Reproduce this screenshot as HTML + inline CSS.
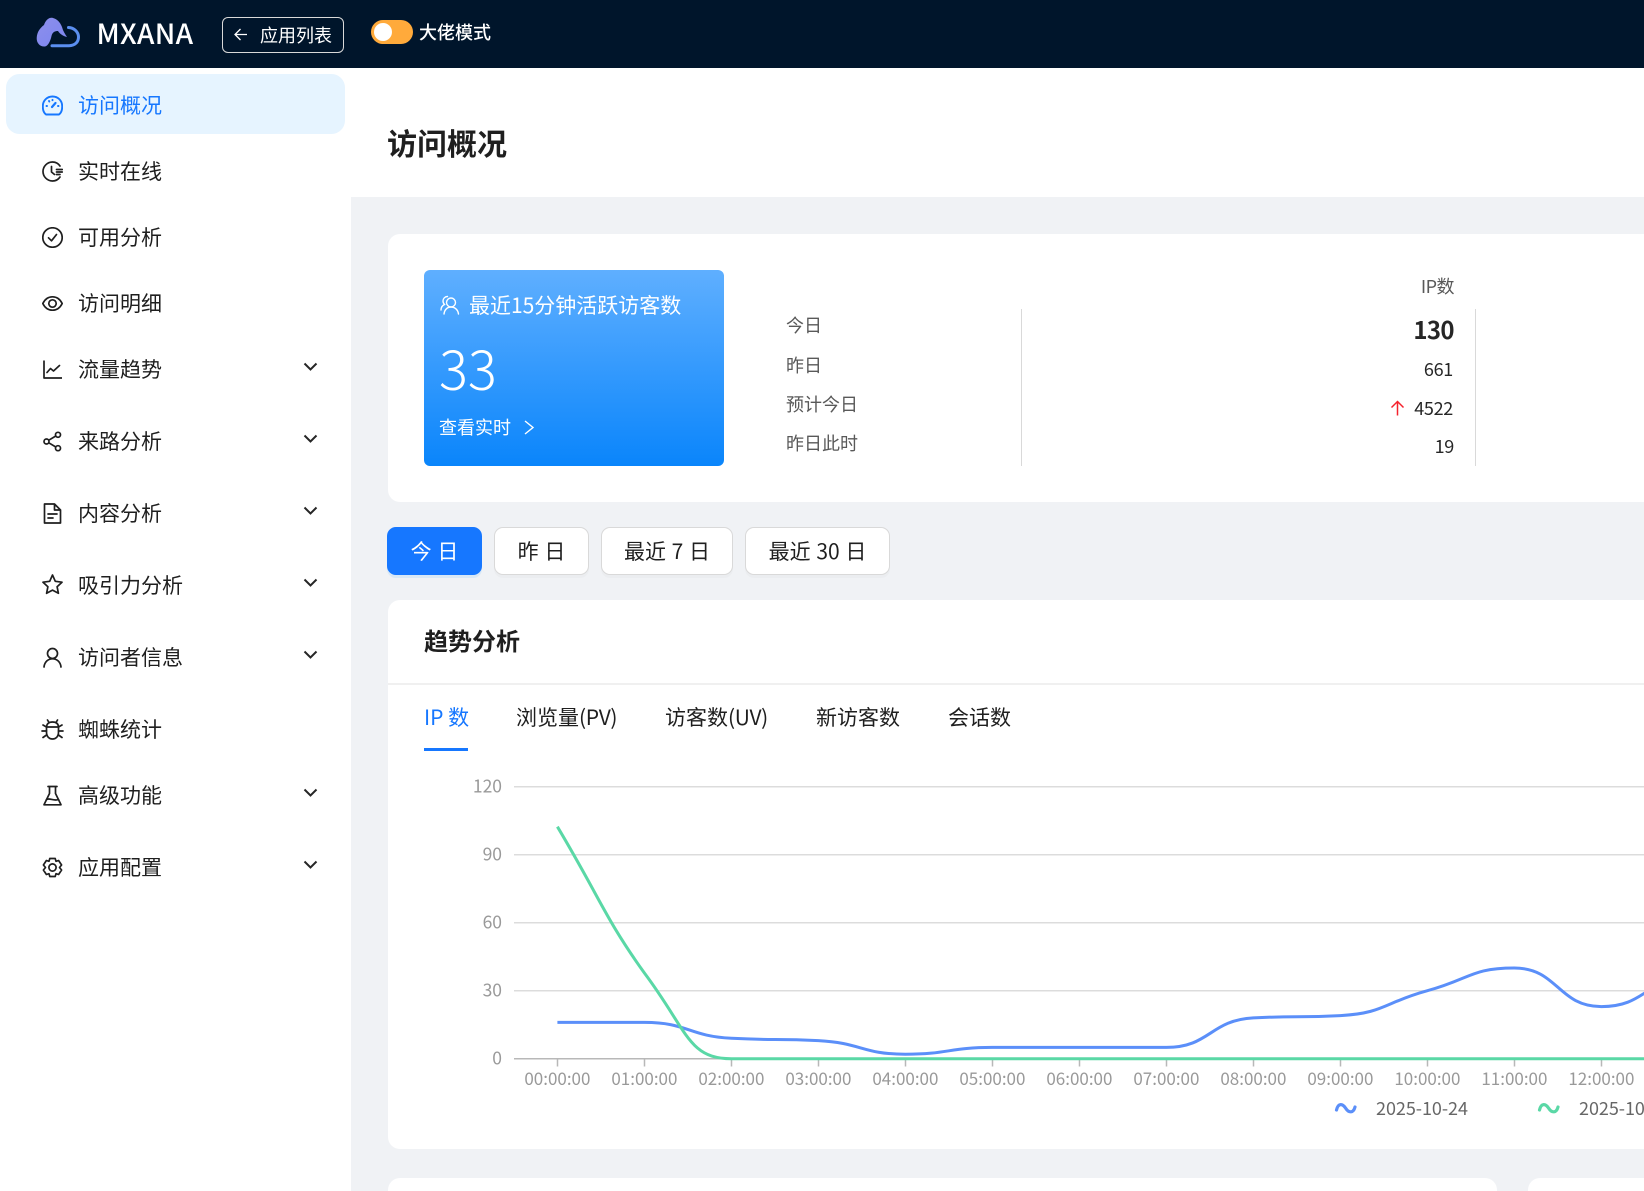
<!DOCTYPE html>
<html lang="zh-CN">
<head>
<meta charset="utf-8">
<title>访问概况</title>
<style>
html,body{margin:0;padding:0;width:1644px;height:1191px;overflow:hidden;background:#f0f2f5}
body{position:relative;font-family:"Noto Sans CJK SC","Liberation Sans",sans-serif;color:#1f1f1f}
.a{position:absolute}
.t{position:absolute;height:30px;line-height:30px;white-space:nowrap}
.m{font-size:21px;left:78px;color:#1f1f1f}
.ic{position:absolute;left:42px;width:21px;height:21px;fill:none;stroke:#1f1f1f;stroke-width:1.700;stroke-linecap:round;stroke-linejoin:round}
.ch{position:absolute;left:303px;width:15px;height:10px;fill:none;stroke:#262626;stroke-width:2}
.l{font-size:18px;left:786px;color:#595959}
.r{font-size:18px;color:#262626;right:191px;text-align:right;letter-spacing:-.3px}
.btn{position:absolute;top:527px;height:48px;box-sizing:border-box;border:1.5px solid #d9d9d9;border-radius:9px;background:#fff;line-height:46px;text-align:center;font-size:21px;color:#1f1f1f;box-shadow:0 3px 0 rgba(0,0,0,.02);white-space:nowrap;word-spacing:1px}
.tab{font-size:21px;top:702px;color:#1f1f1f}
.tab span{letter-spacing:-.35px}
</style>
</head>
<body>

<!-- sidebar & page head -->
<div class="a" style="left:0;top:68px;width:351px;height:1123px;background:#fff"></div>
<div class="a" style="left:351px;top:68px;width:1293px;height:129px;background:#fff"></div>

<!-- top bar -->
<div class="a" style="left:0;top:0;width:1644px;height:68px;background:#00152b"></div>
<svg class="a" style="left:0;top:0" width="90" height="60" viewBox="0 0 90 60">
  <defs><linearGradient id="lg" x1="0" y1="0" x2="1" y2="1"><stop offset="0" stop-color="#8d8fec"/><stop offset="1" stop-color="#7c85ef"/></linearGradient></defs>
  <path d="M44 25C46 19 50 17 53 18C57 19 60 22 62 27C63 31 65 34 67 37C63 36 60 34 58 31C55 31 52.500 32 51.500 36C50.500 41 48 46 45 46.500C40 47 36.500 43 36.700 38C37 32 40 28 44 25Z" fill="url(#lg)"/>
  <path d="M52 45.700H69C75 45.700 78.500 42 78.500 37C78.500 32 74 27.700 68.500 27.500" fill="none" stroke="#5b8ff0" stroke-width="3" stroke-linecap="round"/>
</svg>
<div class="t" style="left:96.500px;top:18px;font-size:28px;font-weight:500;color:#fff;letter-spacing:.3px">MXANA</div>
<div class="a" style="left:222px;top:17px;width:122px;height:36px;box-sizing:border-box;border:1.500px solid #d9d9d9;border-radius:6px"></div>
<svg class="a" style="left:233px;top:27px" width="15" height="15" viewBox="0 0 15 15" fill="none" stroke="#fff" stroke-width="1.300"><path d="M14 7.500H2M7.500 2L2 7.500L7.500 13"/></svg>
<div class="t" style="left:260px;top:20px;font-size:18px;color:#fff">应用列表</div>
<div class="a" style="left:371px;top:20px;width:42px;height:24px;border-radius:12px;background:#ffaa3b"></div>
<div class="a" style="left:374px;top:23px;width:18px;height:18px;border-radius:50%;background:#fff"></div>
<div class="t" style="left:419px;top:17px;font-size:18px;font-weight:500;color:#fff">大佬模式</div>

<!-- active menu -->
<div class="a" style="left:6px;top:74px;width:339px;height:60px;border-radius:13.500px;background:#e6f4ff"></div>

<!-- menu icons -->
<svg class="ic" style="top:95px;stroke:#1677ff;stroke-width:1.900" viewBox="0 0 21 21"><path d="M4 19.500C2 18 .8 15 .8 11.500C.8 5.500 5 1.500 10.500 1.500S20.200 5.500 20.200 11.500C20.200 15 19 18 17 19.500Z"/><path d="M10 12L13.500 8" stroke-width="2.200"/><path d="M4.500 11H5M7 6L7.300 6.500M16 11H16.500M10.500 4.800V5.200" /></svg>
<svg class="ic" style="top:161px" viewBox="0 0 21 21"><path d="M18 5C16.300 2.500 13.500 1 10.500 1C5.300 1 1 5.300 1 10.500S5.300 20 10.500 20C13.500 20 16.300 18.500 18 16"/><path d="M9.500 5.500V11L12.500 13.500M14.500 8.500H20.200M14.500 11H20.200M14.500 13.500H18"/></svg>
<svg class="ic" style="top:227px" viewBox="0 0 21 21"><circle cx="10.500" cy="10.500" r="9.700"/><path d="M6.500 10.800L9.500 13.800L14.500 7.500"/></svg>
<svg class="ic" style="top:293px" viewBox="0 0 21 21"><path d="M.8 10.500C3 6 6.500 3.800 10.500 3.800S18 6 20.200 10.500C18 15 14.500 17.200 10.500 17.200S3 15 .8 10.500Z"/><circle cx="10.500" cy="10.500" r="3.700"/></svg>
<svg class="ic" style="top:359px" viewBox="0 0 21 21"><path d="M2 1.500V19H20" stroke-linecap="butt"/><path d="M5 13.500L8.500 9.500L11.500 12L17.500 6.500"/></svg>
<svg class="ic" style="top:431px" viewBox="0 0 21 21"><circle cx="4.500" cy="10.500" r="2.500"/><circle cx="16" cy="3.800" r="2.500"/><circle cx="16" cy="17.200" r="2.500"/><path d="M6.800 9.200L13.800 5M6.800 11.800L13.800 16"/></svg>
<svg class="ic" style="top:503px" viewBox="0 0 21 21"><path d="M2.500 1H12.500L18.500 7V20H2.500ZM12.500 1V7H18.500"/><path d="M6 11H15M6 15H11"/></svg>
<svg class="ic" style="top:574px" viewBox="0 0 21 21"><path d="M10.500 1L13.300 7.300L20 8.200L15.100 12.700L16.400 19.300L10.500 16.100L4.600 19.300L5.900 12.700L1 8.200L7.700 7.300Z"/></svg>
<svg class="ic" style="top:647px" viewBox="0 0 21 21"><circle cx="10.500" cy="6.500" r="5"/><path d="M2 20C2.500 15 6 11.800 10.500 11.800S18.500 15 19 20"/></svg>
<svg class="ic" style="top:719px;left:41px;width:23px;height:21px" viewBox="0 0 23 21"><path d="M5.500 8.500C5.500 4.500 8 3 11.500 3S17.500 4.500 17.500 8.500V13C17.500 17.500 15 20 11.500 20S5.500 17.500 5.500 13Z"/><path d="M5.500 8H17.500M8 3.500L6.500 1M15 3.500L16.500 1M5.500 12H1M17.500 12H22M5.500 8L2 6M17.500 8L21 6M5.500 16L2 18.500M17.500 16L21 18.500"/></svg>
<svg class="ic" style="top:785px" viewBox="0 0 21 21"><path d="M6 1.500H15M7.500 1.500V8.500L2 19.800H19L13.500 8.500V1.500"/><path d="M4.500 14.500C7.500 12.500 12 16.500 16.500 14.500"/></svg>
<svg class="ic" style="top:857px;left:41px;width:23px;height:21px" viewBox="0 0 23 21"><path d="M8.800 1.500H14.200L15 4.300L17.600 3.500L20.600 8L18.500 10.500L20.600 13L17.600 17.500L15 16.700L14.200 19.500H8.800L8 16.700L5.400 17.500L2.400 13L4.500 10.500L2.400 8L5.400 3.500L8 4.300Z"/><circle cx="11.500" cy="10.500" r="3.600"/></svg>

<!-- menu labels -->
<div class="t m" style="top:90px;color:#1677ff">访问概况</div>
<div class="t m" style="top:156px">实时在线</div>
<div class="t m" style="top:222px">可用分析</div>
<div class="t m" style="top:288px">访问明细</div>
<div class="t m" style="top:354px">流量趋势</div>
<div class="t m" style="top:426px">来路分析</div>
<div class="t m" style="top:498px">内容分析</div>
<div class="t m" style="top:570px">吸引力分析</div>
<div class="t m" style="top:642px">访问者信息</div>
<div class="t m" style="top:714px">蜘蛛统计</div>
<div class="t m" style="top:780px">高级功能</div>
<div class="t m" style="top:852px">应用配置</div>

<!-- chevrons -->
<svg class="ch" style="top:362px" viewBox="0 0 15 10"><path d="M1.500 1.500L7.500 7.500L13.500 1.500"/></svg>
<svg class="ch" style="top:434px" viewBox="0 0 15 10"><path d="M1.500 1.500L7.500 7.500L13.500 1.500"/></svg>
<svg class="ch" style="top:506px" viewBox="0 0 15 10"><path d="M1.500 1.500L7.500 7.500L13.500 1.500"/></svg>
<svg class="ch" style="top:578px" viewBox="0 0 15 10"><path d="M1.500 1.500L7.500 7.500L13.500 1.500"/></svg>
<svg class="ch" style="top:650px" viewBox="0 0 15 10"><path d="M1.500 1.500L7.500 7.500L13.500 1.500"/></svg>
<svg class="ch" style="top:788px" viewBox="0 0 15 10"><path d="M1.500 1.500L7.500 7.500L13.500 1.500"/></svg>
<svg class="ch" style="top:860px" viewBox="0 0 15 10"><path d="M1.500 1.500L7.500 7.500L13.500 1.500"/></svg>

<!-- title -->
<div class="t" style="left:387px;top:124px;height:36px;line-height:36px;font-size:30px;font-weight:600;color:#1f1f1f">访问概况</div>

<!-- overview card -->
<div class="a" style="left:388px;top:234px;width:1290px;height:268px;border-radius:12px;background:#fff"></div>
<div class="a" style="left:424px;top:270px;width:300px;height:196px;border-radius:6px;background:linear-gradient(180deg,#5fafff 0%,#0a85fb 100%)"></div>
<svg class="a" style="left:440px;top:295px" width="20" height="20" viewBox="0 0 20 20" fill="none" stroke="#fff" stroke-width="1.400" stroke-linecap="round"><circle cx="11" cy="7.500" r="4.500"/><path d="M4 19C4.500 14.500 7.500 12 11 12S18 14.500 18.500 19M7.500 1.500C5 1.500 3 3.500 3 6C3 7.500 3.500 8.500 4.500 9.500C2.500 10.500 1 12.500 1 15"/></svg>
<div class="t" style="left:469px;top:290px;font-size:21px;color:#fff">最近15分钟活跃访客数</div>
<div class="t" style="left:439px;top:337px;height:60px;line-height:60px;font-size:54px;font-weight:300;color:#fff">33</div>
<div class="t" style="left:439px;top:412px;font-size:18px;color:#fff">查看实时</div>
<svg class="a" style="left:523px;top:420px" width="12" height="15" viewBox="0 0 12 15" fill="none" stroke="#fff" stroke-width="1.400"><path d="M2 1L10 7.500L2 14"/></svg>

<div class="t l" style="top:310px">今日</div>
<div class="t l" style="top:350px">昨日</div>
<div class="t l" style="top:389px">预计今日</div>
<div class="t l" style="top:428px">昨日此时</div>
<div class="a" style="left:1021px;top:309px;width:1px;height:157px;background:#d9d9d9"></div>
<div class="a" style="left:1475px;top:309px;width:1px;height:157px;background:#d9d9d9"></div>
<div class="t" style="right:190px;top:271px;font-size:18px;color:#595959;letter-spacing:-.5px">IP数</div>
<div class="t r" style="top:314px;font-size:24px;font-weight:700;right:190px;color:#262626;letter-spacing:-.6px">130</div>
<div class="t r" style="top:354px">661</div>
<div class="t r" style="top:393px">4522</div>
<div class="t r" style="top:431px;right:190px">19</div>
<svg class="a" style="left:1390px;top:400px" width="15" height="16" viewBox="0 0 15 16" fill="none" stroke="#f5222d" stroke-width="1.500"><path d="M7.500 15.500V1.500M1.500 7.500L7.500 1.500L13.500 7.500"/></svg>

<!-- range buttons -->
<div class="btn" style="left:387px;width:95px;background:#1677ff;border-color:#1677ff;color:#fff;box-shadow:0 3px 0 rgba(5,145,255,.1)">今 日</div>
<div class="btn" style="left:494px;width:95px">昨 日</div>
<div class="btn" style="left:601px;width:132px">最近 7 日</div>
<div class="btn" style="left:745px;width:145px">最近 30 日</div>

<!-- trend card -->
<div class="a" style="left:388px;top:600px;width:1290px;height:549px;border-radius:12px;background:#fff"></div>
<div class="t" style="left:424px;top:625px;font-size:24px;height:30px;font-weight:600;color:#1f1f1f">趋势分析</div>
<div class="a" style="left:388px;top:683px;width:1256px;height:1.500px;background:#f0f0f0"></div>
<div class="t tab" style="left:424px;color:#1677ff">IP 数</div>
<div class="t tab" style="left:516px">浏览量<span>(PV)</span></div>
<div class="t tab" style="left:665px">访客数<span>(UV)</span></div>
<div class="t tab" style="left:816px">新访客数</div>
<div class="t tab" style="left:948px">会话数</div>
<div class="a" style="left:424px;top:748px;width:44px;height:3px;background:#1677ff"></div>

<!-- chart -->
<svg class="a" style="left:0;top:0" width="1644" height="1191" viewBox="0 0 1644 1191" font-family="'Noto Sans CJK SC','Liberation Sans',sans-serif">
  <g stroke="#dcdcdc" stroke-width="1.500">
    <path d="M514 786.700H1644M514 854.700H1644M514 922.700H1644M514 990.700H1644"/>
  </g>
  <path d="M514 1058.700H1644" stroke="#b8b8b8" stroke-width="1.500"/>
  <path d="M557.500 1059V1066.500M644.500 1059V1066.500M731.500 1059V1066.500M818.500 1059V1066.500M905.500 1059V1066.500M992.500 1059V1066.500M1079.500 1059V1066.500M1166.500 1059V1066.500M1253.500 1059V1066.500M1340.500 1059V1066.500M1427.500 1059V1066.500M1514.500 1059V1066.500M1601.500 1059V1066.500" stroke="#b8b8b8" stroke-width="1.500"/>
  <g font-size="17.500" fill="#999" text-anchor="end">
    <text x="502" y="792.500">120</text>
    <text x="502" y="860.500">90</text>
    <text x="502" y="928.500">60</text>
    <text x="502" y="996.500">30</text>
    <text x="502" y="1064.500">0</text>
  </g>
  <g font-size="17" fill="#999" text-anchor="middle">
    <text x="557.400" y="1085">00:00:00</text>
    <text x="644.400" y="1085">01:00:00</text>
    <text x="731.400" y="1085">02:00:00</text>
    <text x="818.400" y="1085">03:00:00</text>
    <text x="905.400" y="1085">04:00:00</text>
    <text x="992.400" y="1085">05:00:00</text>
    <text x="1079.400" y="1085">06:00:00</text>
    <text x="1166.400" y="1085">07:00:00</text>
    <text x="1253.400" y="1085">08:00:00</text>
    <text x="1340.400" y="1085">09:00:00</text>
    <text x="1427.400" y="1085">10:00:00</text>
    <text x="1514.400" y="1085">11:00:00</text>
    <text x="1601.400" y="1085">12:00:00</text>
  </g>
  <path d="M557.400 1022.400H644.400C687.900 1022.400 687.900 1036 731.400 1038.300C774.900 1040.600 774.900 1038.300 818.400 1040.600C861.900 1042.900 861.900 1054.200 905.400 1054.200C948.900 1054.200 948.900 1047.400 992.400 1047.400H1166.400C1209.900 1047.400 1209.900 1020.200 1253.400 1017.900C1296.900 1015.600 1296.900 1017.900 1340.400 1015.600C1383.900 1013.300 1383.900 1002.600 1427.400 990.700C1470.900 978.800 1470.900 968 1514.400 968C1557.900 968 1557.900 1006.600 1601.400 1006.600C1644.900 1006.600 1644.900 980 1688.400 977" fill="none" stroke="#5b8ff9" stroke-width="3" stroke-linejoin="round"/>
  <path d="M557.400 826.700C601 900 605 918 644.400 973C687.900 1031 687.900 1058.700 731.400 1058.700H1644" fill="none" stroke="#5ad8a6" stroke-width="3" stroke-linejoin="round"/>
  <path d="M1336.500 1110C1338 1103.500 1342 1103 1345.500 1108C1349 1113.500 1353.500 1113 1355 1107" fill="none" stroke="#5b8ff9" stroke-width="3.200" stroke-linecap="round"/>
  <path d="M1539.500 1110C1541 1103.500 1545 1103 1548.500 1108C1552 1113.500 1556.500 1113 1558 1107" fill="none" stroke="#5ad8a6" stroke-width="3.200" stroke-linecap="round"/>
  <g font-size="18" fill="#666">
    <text x="1376" y="1115" textLength="92">2025-10-24</text>
    <text x="1579" y="1115" textLength="92">2025-10-25</text>
  </g>
</svg>

<!-- bottom cards -->
<div class="a" style="left:388px;top:1178px;width:1109px;height:30px;border-radius:12px;background:#fff"></div>
<div class="a" style="left:1528px;top:1178px;width:150px;height:30px;border-radius:12px;background:#fff"></div>

</body>
</html>
